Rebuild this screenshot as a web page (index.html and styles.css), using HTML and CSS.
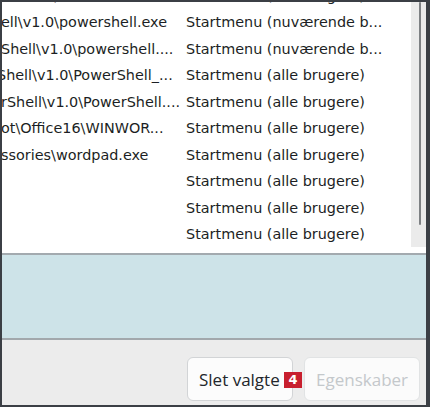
FILE: index.html
```html
<!DOCTYPE html>
<html>
<head>
<meta charset="utf-8">
<link rel="stylesheet" href="styles.css">
</head>
<body>
<div class="window">
  <div class="list">
    <div class="rows">
      <div class="row"><span class="c1">ssories\Windows Media</span><span class="c2">Startmenu (alle brugere)</span></div>
      <div class="row"><span class="c1">ell\v1.0\powershell.exe</span><span class="c2">Startmenu (nuværende b...</span></div>
      <div class="row"><span class="c1">Shell\v1.0\powershell....</span><span class="c2">Startmenu (nuværende b...</span></div>
      <div class="row"><span class="c1"><span class="cut">Shell\v1.0\PowerShell_...</span></span><span class="c2">Startmenu (alle brugere)</span></div>
      <div class="row"><span class="c1">rShell\v1.0\PowerShell....</span><span class="c2">Startmenu (alle brugere)</span></div>
      <div class="row"><span class="c1">ot\Office16\WINWOR...</span><span class="c2">Startmenu (alle brugere)</span></div>
      <div class="row"><span class="c1">ssories\wordpad.exe</span><span class="c2">Startmenu (alle brugere)</span></div>
      <div class="row"><span class="c1"></span><span class="c2">Startmenu (alle brugere)</span></div>
      <div class="row"><span class="c1"></span><span class="c2">Startmenu (alle brugere)</span></div>
      <div class="row"><span class="c1"></span><span class="c2">Startmenu (alle brugere)</span></div>
    </div>
    <div class="scrollbar"><div class="thumb"></div></div>
  </div>
  <div class="info"></div>
  <div class="footer">
    <button class="btn">Slet valgte<span class="badge">4</span></button>
    <button class="btn" disabled>Egenskaber</button>
  </div>
</div>
</body>
</html>
```

FILE: styles.css
```css
html, body {
  margin: 0;
  padding: 0;
  background: #ffffff;
}

.window {
  width: 430px;
  height: 407px;
  box-sizing: border-box;
  border: 2px solid #3b3f45;
  border-right-width: 4px;
  display: flex;
  flex-direction: column;
  overflow: hidden;
}

.list {
  height: 251px;
  flex: none;
  display: flex;
  background: #ffffff;
  border-bottom: 2px solid #a3aaaf;
}

.rows {
  flex: 1;
  overflow: hidden;
  font-family: "DejaVu Sans", sans-serif;
  font-size: 14.4px;
  color: #1c1f24;
}

.rows .row:first-child {
  margin-top: -19.75px;
}

.row {
  height: 26.5px;
  display: flex;
  align-items: center;
  white-space: nowrap;
}

.c1 {
  width: 181px;
  margin-right: 4px;
  margin-left: -1px;
  overflow: hidden;
  flex: none;
}

.cut {
  display: inline-block;
  margin-left: -4px;
}

.c2 {
  overflow: hidden;
}

.scrollbar {
  width: 15px;
  height: 245px;
  background: #ebebeb;
  flex: none;
  position: relative;
}

.thumb {
  position: absolute;
  left: 8px;
  top: 0;
  width: 2px;
  height: 223px;
  border-radius: 1px;
  background: #7e8184;
}

.info {
  height: 83px;
  flex: none;
  background: #cde3e8;
  border-bottom: 2px solid #a2a8ac;
}

.footer {
  flex: 1;
  background: #ececec;
  display: flex;
  justify-content: flex-end;
  align-items: flex-start;
  gap: 11px;
  padding: 17px 6px 0 0;
}

.btn {
  position: relative;
  height: 44px;
  box-sizing: border-box;
  border: 1px solid #d2d4d6;
  border-radius: 6px;
  background: #fcfcfc;
  font-family: "Open Sans", sans-serif;
  font-size: 17px;
  color: #22262b;
  padding: 0 11px;
  margin: 0;
  white-space: nowrap;
}

.btn:first-child {
  width: 106px;
  text-align: left;
}

.btn:disabled {
  width: 116px;
  color: #c4c8cb;
  border-color: #e1e3e4;
  background: #fbfbfb;
}

.badge {
  position: absolute;
  left: 96px;
  top: 14px;
  width: 18px;
  height: 16px;
  background: #c81f2e;
  color: #ffffff;
  font-family: "DejaVu Sans", sans-serif;
  font-weight: bold;
  font-size: 13px;
  line-height: 16px;
  text-align: center;
}
```
